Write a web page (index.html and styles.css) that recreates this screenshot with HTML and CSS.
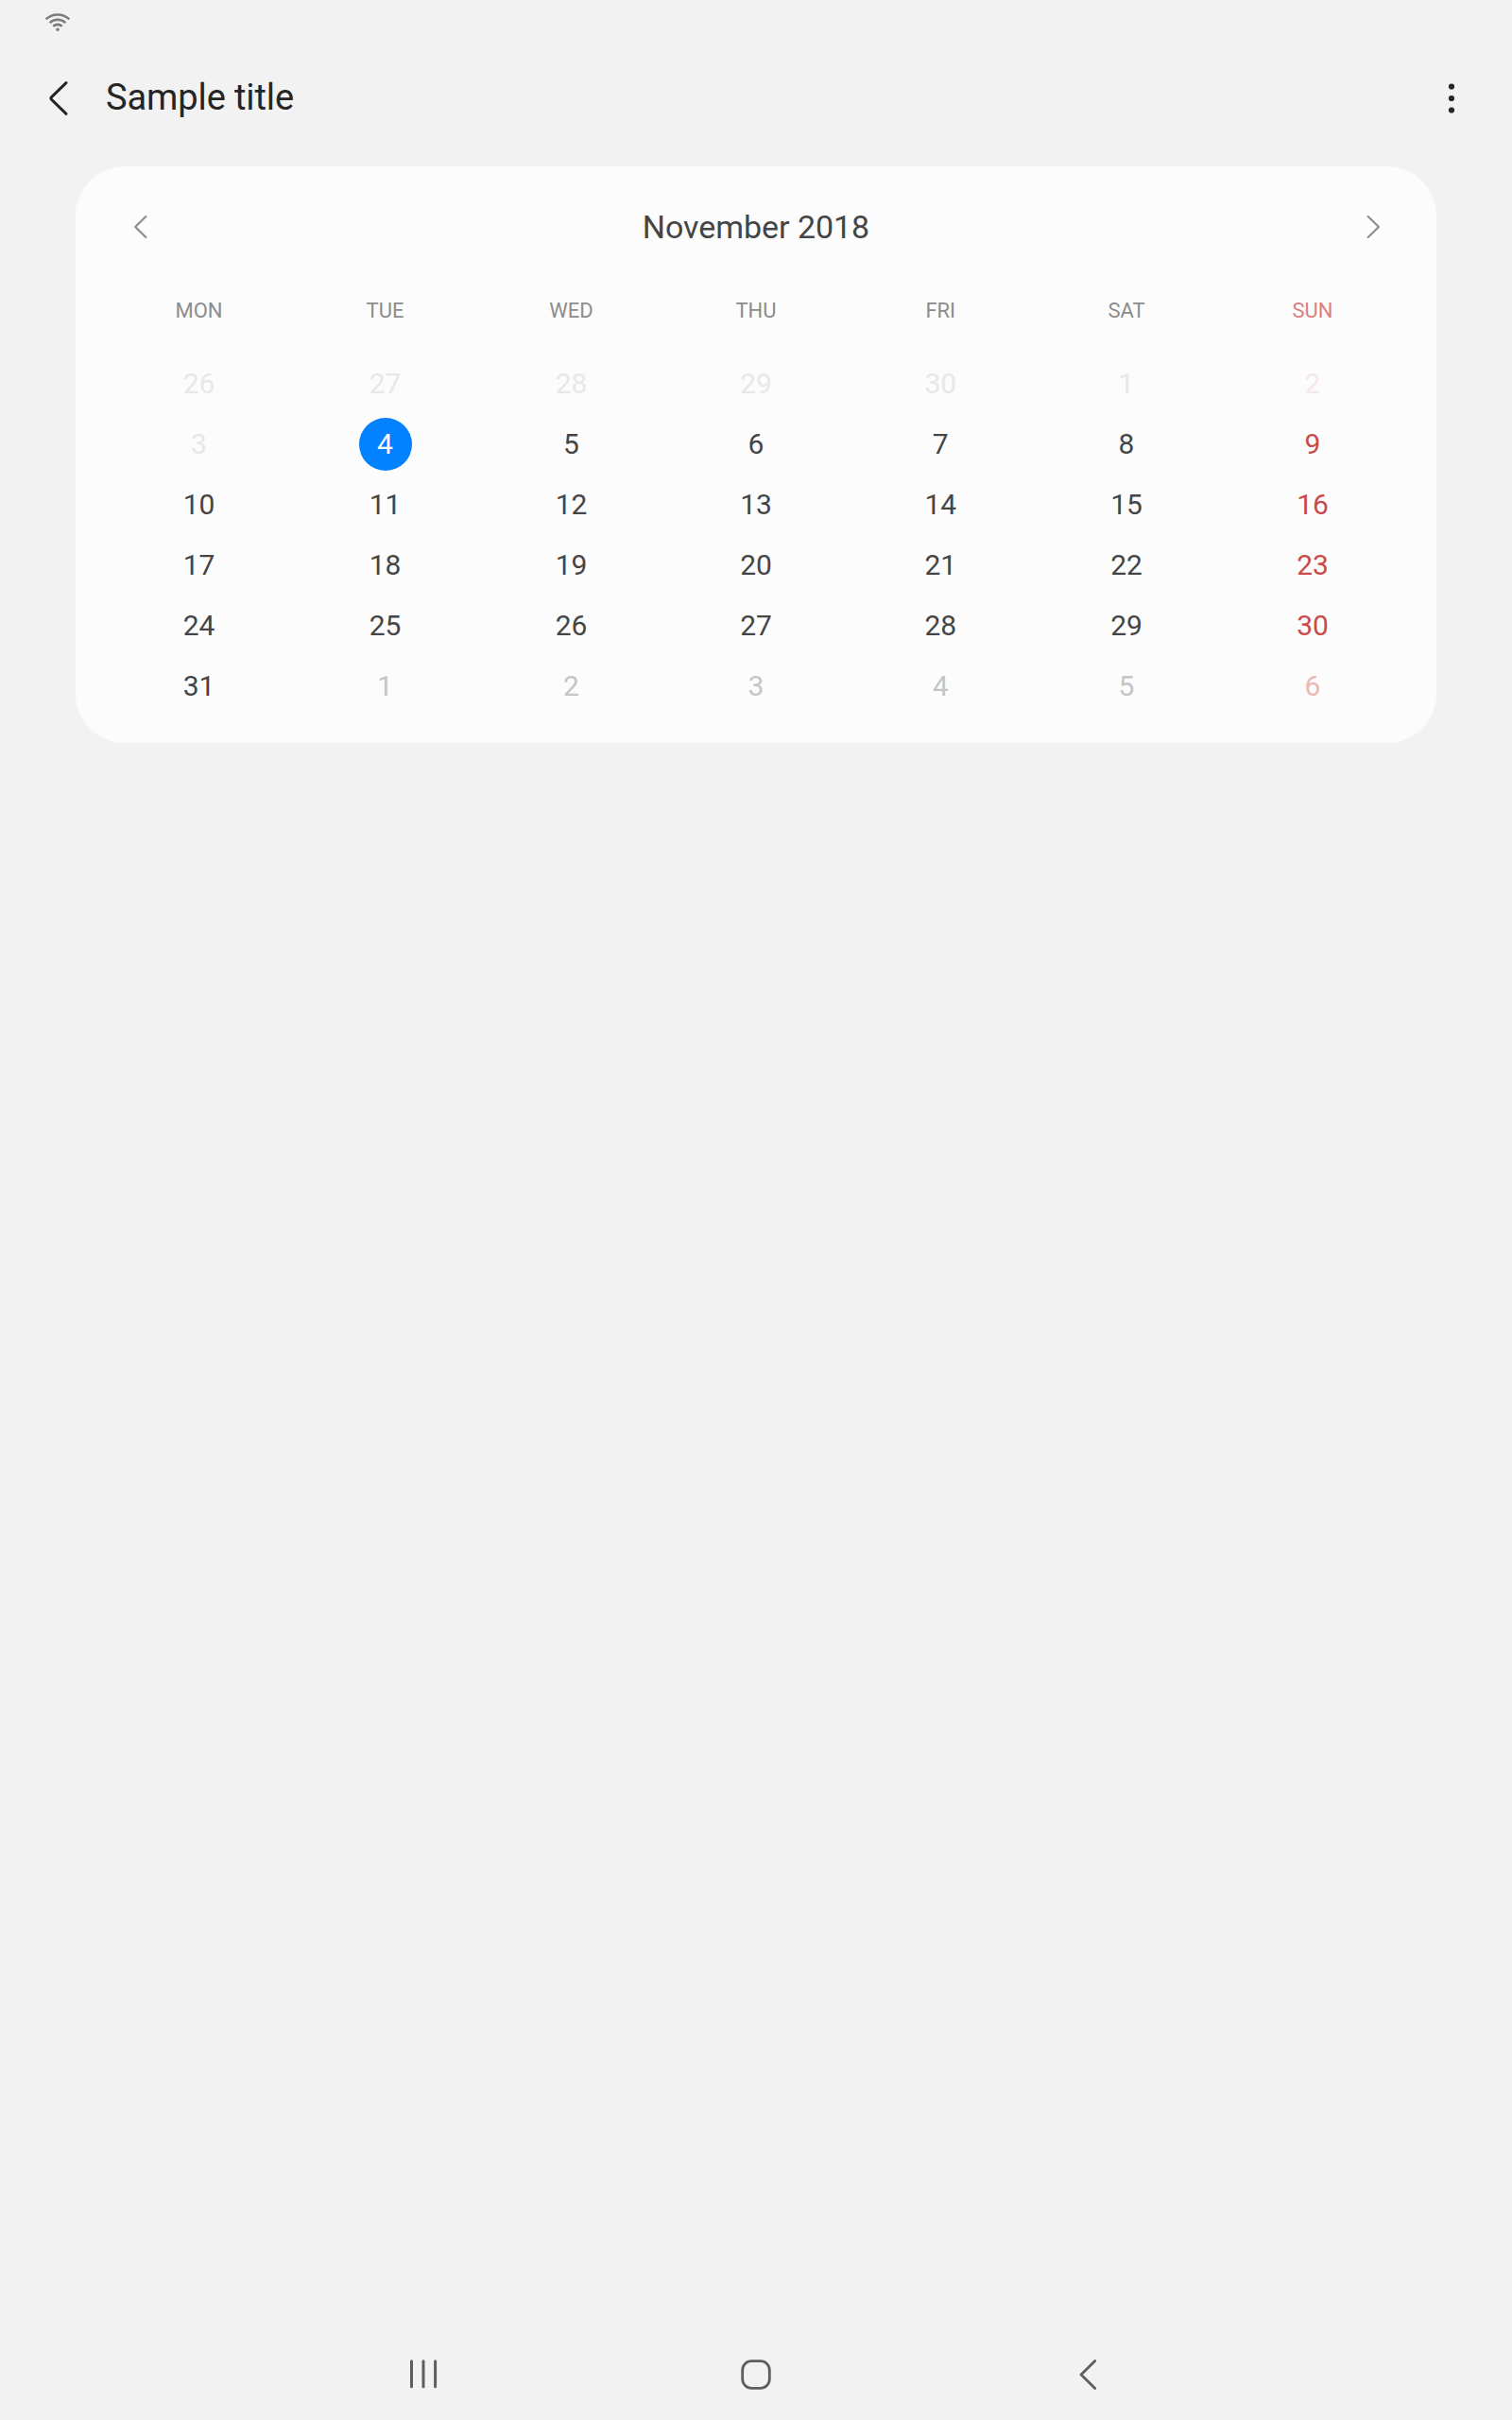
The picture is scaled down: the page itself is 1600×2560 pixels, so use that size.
FILE: index.html
```html
<!DOCTYPE html>
<html lang="en">
<head>
<meta charset="utf-8">
<title>Sample title</title>
<link rel="stylesheet" href="styles.css">
</head>
<body>
<div class="screen">
  <div class="status-bar">
    <svg class="wifi" width="28" height="22" viewBox="0 0 28 22" fill="none" stroke="currentColor" stroke-width="2.5">
      <path d="M1.6 7.3C8.8 .8 19.2 .8 26.4 7.3M5.6 11.1C10.6 6.7 17.4 6.7 22.4 11.1M9.3 14.8C12.1 12.5 15.9 12.5 18.7 14.8"/>
      <circle cx="14" cy="18.3" r="1.8" fill="currentColor" stroke="none"/>
    </svg>
  </div>

  <header class="app-bar">
    <button class="icon-button" aria-label="Back">
      <svg width="24" height="40" viewBox="0 0 24 40" fill="none" stroke="currentColor" stroke-width="3" stroke-linecap="round" stroke-linejoin="round">
        <path d="M20 3.6L4.6 18.6Q3.1 20 4.6 21.4L20 36.4"/>
      </svg>
    </button>
    <h1 class="title">Sample title</h1>
    <button class="icon-button" aria-label="More options">
      <svg width="8" height="34" viewBox="0 0 8 34" fill="currentColor">
        <circle cx="4" cy="4.5" r="3.1"/><circle cx="4" cy="17" r="3.1"/><circle cx="4" cy="29.5" r="3.1"/>
      </svg>
    </button>
  </header>

  <main class="calendar">
    <div class="month-bar">
      <button class="icon-button" aria-label="Previous month">
        <svg width="16" height="28" viewBox="0 0 16 28" fill="none" stroke="currentColor" stroke-width="2.1" stroke-linecap="round" stroke-linejoin="round">
          <path d="M14.4 3L3.6 13.4Q3 14 3.6 14.6L14.4 25"/>
        </svg>
      </button>
      <h2 class="month">November 2018</h2>
      <button class="icon-button" aria-label="Next month">
        <svg width="16" height="28" viewBox="0 0 16 28" fill="none" stroke="currentColor" stroke-width="2.1" stroke-linecap="round" stroke-linejoin="round">
          <path d="M3.7 3L14.5 13.4Q15.1 14 14.5 14.6L3.7 25"/>
        </svg>
      </button>
    </div>
    <div class="week weekdays">
      <span>MON</span><span>TUE</span><span>WED</span><span>THU</span><span>FRI</span><span>SAT</span><span class="sunday">SUN</span>
    </div>
    <div class="week">
      <span class="disabled">26</span><span class="disabled">27</span><span class="disabled">28</span><span class="disabled">29</span><span class="disabled">30</span><span class="disabled">1</span><span class="sunday disabled">2</span>
    </div>
    <div class="week">
      <span class="disabled">3</span><span class="selected">4</span><span>5</span><span>6</span><span>7</span><span>8</span><span class="sunday">9</span>
    </div>
    <div class="week">
      <span>10</span><span>11</span><span>12</span><span>13</span><span>14</span><span>15</span><span class="sunday">16</span>
    </div>
    <div class="week">
      <span>17</span><span>18</span><span>19</span><span>20</span><span>21</span><span>22</span><span class="sunday">23</span>
    </div>
    <div class="week">
      <span>24</span><span>25</span><span>26</span><span>27</span><span>28</span><span>29</span><span class="sunday">30</span>
    </div>
    <div class="week">
      <span>31</span><span class="next">1</span><span class="next">2</span><span class="next">3</span><span class="next">4</span><span class="next">5</span><span class="sunday next">6</span>
    </div>
  </main>

  <nav class="nav-bar">
    <button class="icon-button" aria-label="Recent apps">
      <svg width="36" height="36" viewBox="0 0 36 36" fill="none" stroke="currentColor" stroke-width="3" stroke-linecap="round">
        <path d="M5.5 3.7V30.7M18 3.7V30.7M30.6 3.7V30.7"/>
      </svg>
    </button>
    <button class="icon-button" aria-label="Home">
      <svg width="36" height="36" viewBox="0 0 36 36" fill="none" stroke="currentColor" stroke-width="2.8">
        <rect x="3.7" y="3.7" width="28.6" height="28.6" rx="9.5"/>
      </svg>
    </button>
    <button class="icon-button" aria-label="Back">
      <svg width="36" height="36" viewBox="0 0 36 36" fill="none" stroke="currentColor" stroke-width="2.8" stroke-linecap="round" stroke-linejoin="round">
        <path d="M24.7 3.6L10 18L24.7 32.4"/>
      </svg>
    </button>
  </nav>
</div>
</body>
</html>
```
FILE: styles.css
```css
* {
  box-sizing: border-box;
}

body {
  margin: 0;
  background: #f2f2f2;
  color: #252525;
  font-family: Roboto, "Liberation Sans", sans-serif;
  font-weight: 400;
}

h1,
h2 {
  margin: 0;
  font-weight: inherit;
}

svg {
  display: block;
}

.screen {
  display: flex;
  flex-direction: column;
  width: 1600px;
  height: 2560px;
}

.icon-button {
  display: flex;
  padding: 0;
  border: 0;
  background: none;
  color: inherit;
}

.status-bar {
  height: 48px;
  padding: 13px 47px 0;
  color: #7c7c7c;
}

.app-bar {
  display: flex;
  align-items: center;
  height: 112px;
  padding: 0 60px 0 50px;
}

.title {
  flex: 1;
  margin-left: 38px;
  padding-bottom: 1px;
  font-size: 38px;
  line-height: 43px;
  letter-spacing: -0.1px;
}

.calendar {
  height: 610px;
  margin: 16px 80px 0;
  padding: 24px 32px 28px;
  border-radius: 52px;
  background: #fcfcfc;
  color: #454545;
}

.month-bar {
  display: flex;
  align-items: center;
  justify-content: space-between;
  height: 80px;
  padding: 0 28px;
  color: #8c8c8c;
}

.month {
  color: #454545;
  font-size: 34px;
  line-height: 40px;
  letter-spacing: -0.05px;
}

.week {
  display: grid;
  grid-template-columns: repeat(3, 197px) 194px 196.5px repeat(2, 197px);
  place-items: center;
  height: 64px;
  font-size: 30px;
  line-height: 56px;
}

.weekdays {
  height: 94px;
  padding-top: 4px;
  color: #8c8c8c;
  font-size: 22px;
}

.sunday {
  color: #c94a4a;
}

.weekdays .sunday {
  color: #d98080;
}

.disabled {
  color: #e8e8e8;
}

.sunday.disabled {
  color: #f7e8e8;
}

.next {
  color: #c5c5c5;
}

.sunday.next {
  color: #ecb7b7;
}

.selected {
  width: 56px;
  border-radius: 50%;
  background: #0381fe;
  color: #fcfcfc;
  text-align: center;
}

.nav-bar {
  display: flex;
  justify-content: space-between;
  align-items: center;
  height: 96px;
  margin-top: auto;
  padding: 0 430px;
  color: #5e5e5e;
}
```
